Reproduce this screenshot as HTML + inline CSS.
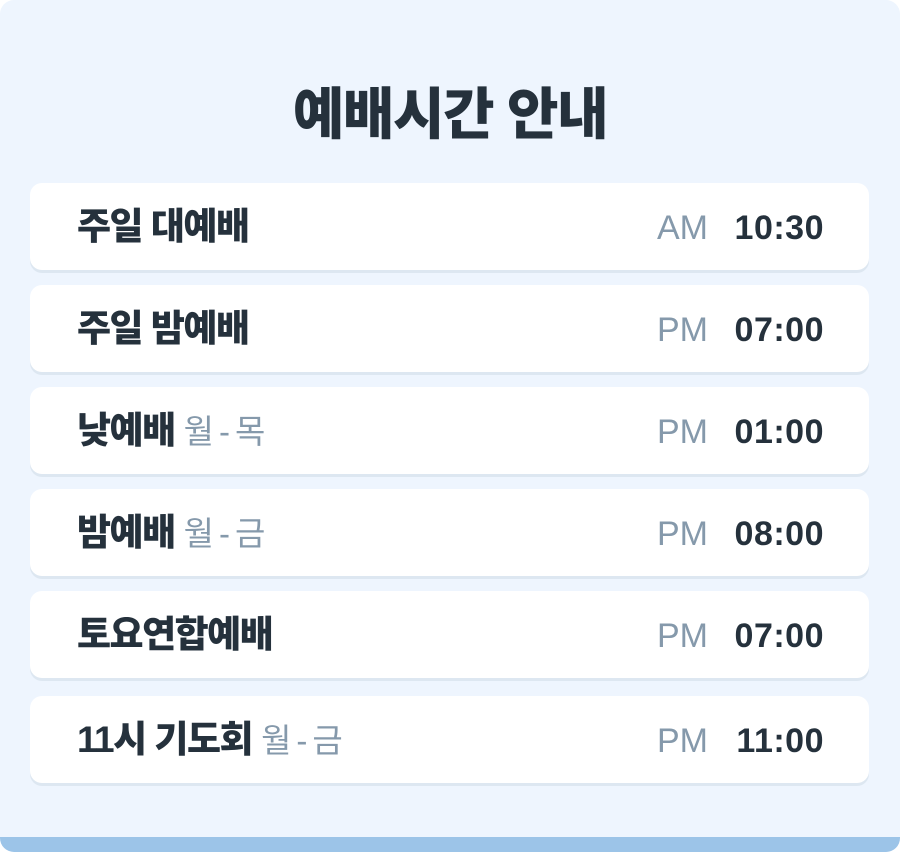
<!DOCTYPE html>
<html><head><meta charset="utf-8"><style>
*{margin:0;padding:0;box-sizing:border-box}
html,body{width:900px;height:852px;background:#fff;overflow:hidden}
.wrap{position:absolute;left:0;top:0;width:900px;height:852px;background:#eef5fe;border-radius:14px;overflow:hidden;font-family:"Liberation Sans","Noto Sans CJK KR",sans-serif}
.bar{position:absolute;left:0;bottom:0;width:900px;height:15px;background:#9cc4e8}
h1{position:absolute;top:80px;left:0;width:900px;text-align:center;font-size:56px;font-weight:900;color:#25313c;letter-spacing:-1.5px;line-height:70px}
.row{position:absolute;left:30px;width:839px;height:87px;background:#fff;border-radius:12px;box-shadow:0 3px 0 #dde7f1}
.name{position:absolute;left:47px;top:21px;font-size:37px;font-weight:900;color:#25313c;line-height:46px;letter-spacing:-1.5px}
.name span{font-weight:400;color:#8599ab;letter-spacing:5px;margin-left:9px;font-size:33px}
.ap{position:absolute;right:161px;top:24px;font-size:34px;color:#8599ab;line-height:42px}
.t{position:absolute;right:45px;top:24px;font-size:34px;font-weight:700;color:#25313c;line-height:42px;letter-spacing:0.5px}
</style></head><body><div class="wrap">
<h1>예배시간 안내</h1>
<div class="row" style="top:183px"><div class="name">주일 대예배</div><div class="ap">AM</div><div class="t">10:30</div></div>
<div class="row" style="top:285px"><div class="name">주일 밤예배</div><div class="ap">PM</div><div class="t">07:00</div></div>
<div class="row" style="top:387px"><div class="name">낮예배<span>월-목</span></div><div class="ap">PM</div><div class="t">01:00</div></div>
<div class="row" style="top:489px"><div class="name">밤예배<span>월-금</span></div><div class="ap">PM</div><div class="t">08:00</div></div>
<div class="row" style="top:591px"><div class="name">토요연합예배</div><div class="ap">PM</div><div class="t">07:00</div></div>
<div class="row" style="top:696px"><div class="name">11시 기도회<span>월-금</span></div><div class="ap">PM</div><div class="t">11:00</div></div>
<div class="bar"></div>
</div></body></html>
